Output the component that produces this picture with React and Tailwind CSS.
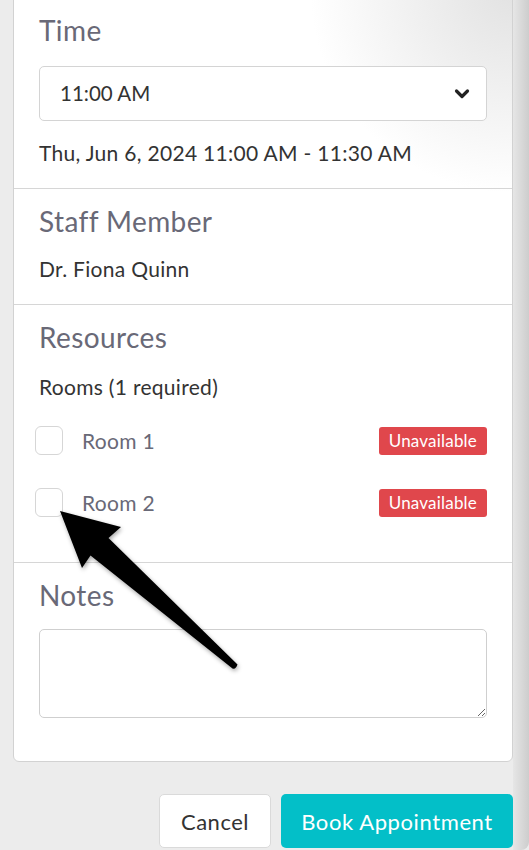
import React from 'react';

const Heading = ({ children }) => (
  <h3 className="text-[28px] leading-[32px] tracking-[0.4px] text-[#696977]">{children}</h3>
);

const RoomRow = ({ label, className }) => (
  <div className={`flex items-center justify-between ${className}`}>
    <div className="flex items-center">
      <div className="w-[28px] h-[29px] -ml-[4px] rounded-[6px] border border-[#d6d6d6] bg-white"></div>
      <span className="ml-[19px] text-[21px] leading-[24px] tracking-[0.3px] text-[#696977]">{label}</span>
    </div>
    <span className="h-[28px] px-[10px] flex items-center rounded-[3px] bg-[#e0474c] text-white text-[17px] tracking-[0.2px]">
      Unavailable
    </span>
  </div>
);

const Arrow = () => (
  <svg
    className="absolute left-0 top-0 pointer-events-none drop-shadow-[1px_2px_2px_rgba(0,0,0,0.35)]"
    width="529"
    height="850"
    viewBox="0 0 529 850"
  >
    <path
      d="M60 511 L121 527 L108.5 538 L237.5 664.5 Q236 669.5 232.5 668.5 L90.5 555.5 L82 568 Z"
      fill="#000"
      strokeLinejoin="round"
    />
  </svg>
);

export default function App() {
  return (
    <div
      className="relative w-[529px] h-[850px] overflow-hidden bg-[#ececec] flex"
      style={{ fontFamily: 'Lato, "Open Sans", sans-serif' }}
    >
      <div className="w-[513px] pl-[13px] flex flex-col">
        <div className="-mt-[10px] bg-white border border-[#d2d2d2] rounded-[6px] bg-[radial-gradient(circle_at_100%_0%,#e2e2e2,#ffffff_22%)]">
          {/* Time */}
          <div className="px-[25px] pt-[23px] pb-[23px] border-b border-[#d6d6d6]">
            <Heading>Time</Heading>
            <div className="mt-[20px] h-[55px] rounded-[5px] border border-[#d4d4d4] bg-white flex items-center justify-between pl-[20px] pr-[16px]">
              <span className="text-[20.5px] text-[#333]">11:00 AM</span>
              <svg width="16" height="12" viewBox="0 0 16 12">
                <path d="M2.5 3 L8 8.5 L13.5 3" fill="none" stroke="#222" strokeWidth="3.2" strokeLinecap="round" strokeLinejoin="round" />
              </svg>
            </div>
            <p className="mt-[20px] text-[21px] leading-[24px] tracking-[0.3px] text-[#333]">Thu, Jun 6, 2024 11:00 AM - 11:30 AM</p>
          </div>

          {/* Staff */}
          <div className="px-[25px] pt-[16px] pb-[23px] border-b border-[#d6d6d6]">
            <Heading>Staff Member</Heading>
            <p className="mt-[20px] text-[21px] leading-[24px] tracking-[0.3px] text-[#333]">Dr. Fiona Quinn</p>
          </div>

          {/* Resources */}
          <div className="px-[25px] pt-[16px] pb-[45px] border-b border-[#d6d6d6]">
            <Heading>Resources</Heading>
            <p className="mt-[22px] text-[21px] leading-[24px] tracking-[0.3px] text-[#333]">Rooms (1 required)</p>
            <RoomRow label="Room 1" className="mt-[27px]" />
            <RoomRow label="Room 2" className="mt-[33px]" />
          </div>

          {/* Notes */}
          <div className="px-[25px] pt-[16px] pb-[43px]">
            <Heading>Notes</Heading>
            <textarea className="mt-[18px] block w-full h-[89px] rounded-[5px] border border-[#cfcfcf] bg-white"></textarea>
          </div>
        </div>

        <div className="mt-[32px] flex justify-end gap-[10px]">
          <button className="w-[112px] h-[54px] rounded-[5px] border border-[#dadada] bg-white text-[22px] tracking-[0.5px] text-[#333]">
            Cancel
          </button>
          <button className="w-[232px] h-[54px] rounded-[5px] bg-[#03bfc8] text-[22px] tracking-[0.6px] text-white">
            Book Appointment
          </button>
        </div>
      </div>
      <div className="w-[16px] h-full bg-gradient-to-r from-[#e6e6e6] to-[#cdcdcd] rounded-br-[8px]"></div>
      <Arrow />
    </div>
  );
}
